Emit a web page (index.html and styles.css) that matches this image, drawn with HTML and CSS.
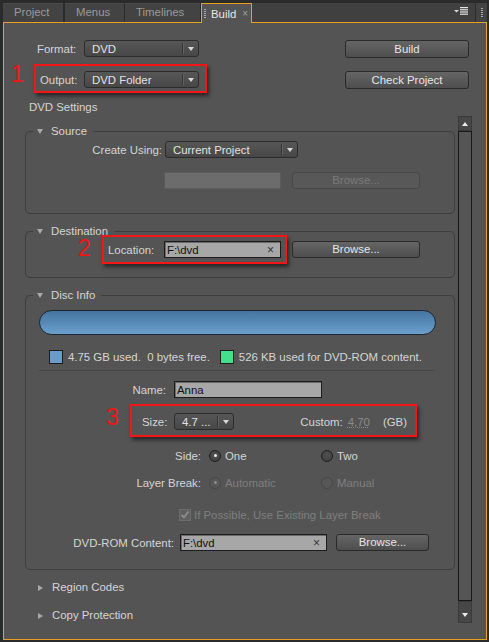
FILE: index.html
```html
<!DOCTYPE html>
<html>
<head>
<meta charset="utf-8">
<link rel="stylesheet" href="styles.css">
</head>
<body>
<div class="window">
  <div class="tabbar">
    <div class="tab tab-project">Project</div>
    <div class="tab tab-menus">Menus</div>
    <div class="tab tab-timelines">Timelines</div>
    <div class="tab-build"><span class="grip"></span><span class="tab-label">Build</span><span class="tab-close">×</span></div>
    <div class="tab-fill">
      <svg class="menu-icon" width="14" height="8" viewBox="0 0 14 8">
        <polygon points="0,3 5,3 2.5,5.5" fill="#d8d8d8"/>
        <rect x="6" y="0" width="8" height="1.2" fill="#e6e6e6"/>
        <rect x="6" y="2.2" width="8" height="1.2" fill="#e6e6e6"/>
        <rect x="6" y="4.4" width="8" height="1.2" fill="#e6e6e6"/>
        <rect x="6" y="6.6" width="8" height="1.2" fill="#e6e6e6"/>
      </svg>
    </div>
    <div class="tab-grip"><span class="grip"></span></div>
  </div>

  <div class="panel">
    <div class="top">
      <div class="top-left">
        <div class="format-row">
          <span class="lbl lbl-format">Format:</span>
          <div class="dropdown dd-format"><span class="dd-text">DVD</span><span class="dd-btn"><span class="dd-arrow"></span></span></div>
        </div>
        <div class="output-row">
          <span class="anno-num num1">1</span>
          <div class="anno-box box1">
            <span class="lbl lbl-output">Output:</span>
            <div class="dropdown dd-format"><span class="dd-text">DVD Folder</span><span class="dd-btn"><span class="dd-arrow"></span></span></div>
          </div>
        </div>
      </div>
      <div class="top-right">
        <button class="btn btn-top">Build</button>
        <button class="btn btn-top btn-check">Check Project</button>
      </div>
    </div>

    <div class="section-title">DVD Settings</div>

    <div class="scroll">
      <div class="scroll-content">
        <fieldset class="group group-source">
          <legend><span class="tri-down"></span>Source</legend>
          <div class="row row-create">
            <span class="lbl lbl-create">Create Using:</span>
            <div class="dropdown dd-create"><span class="dd-text">Current Project</span><span class="dd-btn"><span class="dd-arrow"></span></span></div>
          </div>
          <div class="row row-src2">
            <div class="field field-disabled"></div>
            <button class="btn btn-browse btn-disabled">Browse...</button>
          </div>
        </fieldset>

        <fieldset class="group group-dest">
          <legend><span class="tri-down"></span>Destination</legend>
          <div class="row row-dest">
            <span class="anno-num num2">2</span>
            <div class="anno-box box2">
              <span class="lbl lbl-loc">Location:</span>
              <div class="field field-loc"><span class="field-text">F:\dvd</span><span class="field-x">×</span></div>
            </div>
            <button class="btn btn-browse btn-dest">Browse...</button>
          </div>
        </fieldset>

        <fieldset class="group group-disc">
          <legend><span class="tri-down"></span>Disc Info</legend>
          <div class="usage-bar"></div>
          <div class="usage-row">
            <span class="swatch swatch-blue"></span>
            <span class="usage-text">4.75 GB used.&nbsp; 0 bytes free.</span>
            <span class="swatch swatch-green"></span>
            <span class="usage-text">526 KB used for DVD-ROM content.</span>
          </div>
          <div class="sep"></div>
          <div class="row row-name">
            <span class="lbl lbl-name">Name:</span>
            <div class="field field-name"><span class="field-text">Anna</span></div>
          </div>
          <div class="row row-size">
            <span class="anno-num num3">3</span>
            <div class="anno-box box3">
              <span class="lbl lbl-size">Size:</span>
              <div class="dropdown dd-size"><span class="dd-text">4.7 ...</span><span class="dd-btn"><span class="dd-arrow"></span></span></div>
              <span class="lbl lbl-custom">Custom:</span>
              <span class="custom-val">4,70</span>
              <span class="lbl lbl-gb">(GB)</span>
            </div>
          </div>
          <div class="row row-radio row-side">
            <span class="lbl lbl-radio">Side:</span>
            <span class="opt"><span class="radio on"></span><span class="opt-text">One</span></span>
            <span class="opt"><span class="radio"></span><span class="opt-text">Two</span></span>
          </div>
          <div class="row row-radio row-layer">
            <span class="lbl lbl-radio">Layer Break:</span>
            <span class="opt disabled"><span class="radio on"></span><span class="opt-text">Automatic</span></span>
            <span class="opt disabled"><span class="radio"></span><span class="opt-text">Manual</span></span>
          </div>
          <div class="row row-check">
            <span class="check"><svg width="10" height="10" viewBox="0 0 10 10"><polyline points="1.5,5 4,7.5 8.5,1.5" fill="none" stroke="#8e8e8e" stroke-width="1.8"/></svg></span>
            <span class="check-text">If Possible, Use Existing Layer Break</span>
          </div>
          <div class="row row-rom">
            <span class="lbl lbl-rom">DVD-ROM Content:</span>
            <div class="field field-rom"><span class="field-text">F:\dvd</span><span class="field-x">×</span></div>
            <button class="btn btn-browse btn-rom">Browse...</button>
          </div>
        </fieldset>

        <div class="collapsed collapsed-region"><span class="tri-right"></span>Region Codes</div>
        <div class="collapsed collapsed-copy"><span class="tri-right"></span>Copy Protection</div>
      </div>

      <div class="scrollbar">
        <div class="sb-up"><span class="sb-tri-up"></span></div>
        <div class="sb-thumb"></div>
        <div class="sb-down"><span class="sb-tri-down"></span></div>
      </div>
    </div>
  </div>
</div>
</body>
</html>
```

FILE: styles.css
```css
* { box-sizing: border-box; }
html, body { margin: 0; padding: 0; }
body {
  width: 489px;
  height: 642px;
  overflow: hidden;
  background: #2b2b2b;
  font-family: "Liberation Sans", Arial, sans-serif;
  font-size: 11.4px;
  color: #d4d4d4;
}

.window {
  height: 642px;
  padding: 3px 2px 2px 3px;
  display: flex;
  flex-direction: column;
}

/* ---------- tabs ---------- */
.tabbar {
  display: flex;
  height: 19px;
  flex: none;
}
.tab {
  height: 19px;
  line-height: 19px;
  padding-left: 11px;
  background: #434343;
  box-shadow: inset 0 1px 0 #4b4b4b;
  color: #9a9a9a;
  white-space: nowrap;
}
.tab-project { width: 60px; margin-right: 2px; }
.tab-menus { width: 59px; margin-right: 1px; }
.tab-timelines { width: 75px; margin-right: 1px; }
.tab-build {
  position: relative;
  z-index: 1;
  width: 51px;
  height: 20px;
  display: flex;
  align-items: center;
  padding-left: 2px;
  background: #545454;
  border: 1px solid #e9a21c;
  border-bottom: none;
  color: #e6e6e6;
}
.grip {
  width: 2px;
  height: 10px;
  background: repeating-linear-gradient(to bottom, #a9a9a9 0 1px, transparent 1px 2px);
  flex: none;
}
.tab-build .grip { margin-right: 5px; }
.tab-close {
  margin-left: 6px;
  color: #a0a0a0;
  font-size: 10px;
}
.tab-fill {
  flex: 1;
  margin-right: 1px;
  background: #404040;
  display: flex;
  justify-content: flex-end;
  align-items: flex-start;
  padding: 4px 7px 0 0;
}
.menu-icon { display: block; }
.tab-grip {
  width: 11px;
  background: #434343;
  display: flex;
  justify-content: center;
  align-items: center;
}

/* ---------- panel ---------- */
.panel {
  flex: 1;
  min-height: 0;
  display: flex;
  flex-direction: column;
  background: #545454;
  border: 1px solid #e9a21c;
}

.top {
  display: flex;
  justify-content: space-between;
  align-items: flex-start;
  padding: 17px 17px 0 7px;
}
.top-left { display: flex; flex-direction: column; }
.top-right { display: flex; flex-direction: column; }

.format-row {
  display: flex;
  align-items: center;
  margin-left: 26px;
  height: 17px;
}
.lbl { white-space: nowrap; }
.lbl-format { width: 47px; }
.output-row {
  display: flex;
  align-items: center;
  margin-top: 7px;
}
.lbl-output { width: 44px; }

/* annotations */
.anno-num {
  align-self: flex-start;
  width: 23px;
  flex: none;
  font-size: 23px;
  line-height: 23px;
  color: #f01414;
}
.anno-box {
  display: flex;
  align-items: center;
  border: 2px solid #f41616;
  box-shadow: 2px 3px 4px rgba(0, 0, 0, 0.55);
}
.num1 { margin-top: -1px; }
.box1 { padding: 5px 6px 3px 4px; }

/* dropdown */
.dropdown {
  display: flex;
  align-items: center;
  height: 17px;
  border: 1px solid #2c2c2c;
  border-radius: 3px;
  background: linear-gradient(#575757, #474747);
  color: #e2e2e2;
  flex: none;
}
.dd-text {
  flex: 1;
  padding-left: 7px;
  white-space: nowrap;
  overflow: hidden;
}
.dd-btn {
  width: 16px;
  height: 11px;
  border-left: 1px solid #353535;
  box-shadow: inset 1px 0 0 #626262;
  display: flex;
  align-items: center;
  justify-content: center;
}
.dd-arrow {
  width: 0;
  height: 0;
  border-left: 3.5px solid transparent;
  border-right: 3.5px solid transparent;
  border-top: 4px solid #d8d8d8;
}
.dd-format { width: 115px; }
.dd-create { width: 133px; margin-left: 3px; }
.dd-size { width: 60px; }

/* buttons */
.btn {
  font-family: inherit;
  font-size: 11.4px;
  height: 17px;
  padding: 0;
  border: 1px solid #2a2a2a;
  border-radius: 3px;
  background: linear-gradient(#656565, #4e4e4e);
  color: #e6e6e6;
  line-height: 15px;
  text-align: center;
  flex: none;
}
.btn-top { width: 124px; height: 18px; }
.btn-check { margin-top: 13px; }
.btn-browse { width: 128px; }
.btn-disabled {
  background: #585858;
  border-color: #484848;
  color: #7b7b7b;
}
.btn-dest { margin-left: 5px; }
.btn-rom { width: 93px; margin-left: 9px; }

/* text fields */
.field {
  height: 17px;
  display: flex;
  align-items: center;
  justify-content: space-between;
  padding: 0 6px 0 2px;
  background: #a7a7a7;
  border: 1px solid #1c1c1c;
  box-shadow: inset 1px 1px 0 #6a6a6a;
  color: #111;
  flex: none;
}
.field-x { color: #333; font-size: 12px; }
.field-disabled {
  width: 117px;
  background: #6c6c6c;
  border-color: #5b5b5b;
  box-shadow: none;
}
.field-loc { width: 117px; }
.field-name { width: 148px; }
.field-rom { width: 147px; }

.section-title {
  margin: 7px 0 0 25px;
  line-height: 14px;
}

/* ---------- scroll area ---------- */
.scroll {
  flex: 1;
  min-height: 0;
  display: flex;
  margin: 2px 14px 16px 21px;
}
.scroll-content {
  flex: 1;
  min-width: 0;
  overflow: hidden;
}

.group {
  margin: 10px 0 0 0;
  padding: 0;
  border: 1px solid #3e3e3e;
  border-radius: 5px;
  min-width: 0;
}
.group-source { margin-top: 8px; padding-bottom: 24px; }
.group-dest { padding-bottom: 13px; }
.group-disc { padding-bottom: 18px; }

legend {
  margin-left: 7px;
  padding: 0 6px 0 4px;
  line-height: 14px;
  color: #d4d4d4;
}
.tri-down {
  display: inline-block;
  width: 0;
  height: 0;
  border-left: 3.5px solid transparent;
  border-right: 3.5px solid transparent;
  border-top: 5px solid #a9a9a9;
  margin-right: 8px;
  vertical-align: 1px;
}
.tri-right {
  display: inline-block;
  width: 0;
  height: 0;
  border-top: 3.5px solid transparent;
  border-bottom: 3.5px solid transparent;
  border-left: 5px solid #a9a9a9;
  margin-right: 9px;
  vertical-align: 0;
}

.row { display: flex; align-items: center; }

.row-create { margin-top: 3px; }
.lbl-create { width: 136px; text-align: right; }
.row-src2 { margin: 14px 0 0 138px; }
.row-src2 .btn { margin-left: 11px; }

.row-dest { margin: -3px 0 0 52px; }
.num2 { width: 24px; margin-top: 2px; }
.box2 { padding: 4px; }
.lbl-loc { width: 56px; }

.usage-bar {
  margin: 8px 18px 0 13px;
  height: 25px;
  border-radius: 13px;
  border: 1px solid #1d2732;
  background: linear-gradient(#4674a0, #6b9fcc);
}
.usage-row {
  display: flex;
  align-items: center;
  height: 14px;
  margin: 15px 0 0 23px;
}
.swatch {
  width: 14px;
  height: 14px;
  border: 1px solid #1c1c1c;
  flex: none;
}
.swatch-blue { background: #699bcb; }
.swatch-green { background: #43e08b; margin-left: 10px; }
.usage-text { margin-left: 5px; white-space: nowrap; }

.sep {
  margin: 6px 19px 0 13px;
  border-top: 1px solid #474747;
}

.row-name { margin-top: 10px; }
.lbl-name { width: 148px; text-align: right; padding-right: 8px; }

.row-size { margin: 6px 0 0 80px; }
.num3 { width: 24px; margin-top: 2px; }
.box3 { width: 287px; padding: 7px 8px 5px 10px; }
.lbl-size { width: 32px; }
.lbl-custom { margin-left: auto; }
.custom-val {
  margin-left: 5px;
  color: #8a8a8a;
  text-decoration: underline dotted #8a8a8a;
}
.lbl-gb { margin-left: 13px; }

.row-radio { height: 15px; }
.row-side { margin-top: 11px; }
.row-layer { margin-top: 12px; }
.lbl-radio { width: 175px; text-align: right; }
.opt {
  display: flex;
  align-items: center;
  width: 112px;
}
.opt:first-of-type { margin-left: 8px; }
.lbl-radio + .opt { margin-left: 8px; }
.opt-text { margin-left: 4px; }
.radio {
  width: 12px;
  height: 12px;
  border-radius: 50%;
  border: 1px solid #1f1f1f;
  background: radial-gradient(circle at 50% 40%, #505050, #3e3e3e);
  display: flex;
  align-items: center;
  justify-content: center;
  flex: none;
}
.radio.on::after {
  content: "";
  width: 3px;
  height: 3px;
  border-radius: 50%;
  background: #ececec;
}
.opt.disabled { color: #7f7f7f; }
.opt.disabled .radio {
  border-color: #474747;
  background: #575757;
}
.opt.disabled .radio.on::after { background: #8c8c8c; }

.row-check { margin: 17px 0 0 153px; height: 15px; }
.check {
  width: 12px;
  height: 12px;
  border: 1px solid #6c6c6c;
  background: #5f5f5f;
  display: flex;
  align-items: center;
  justify-content: center;
  flex: none;
}
.check svg { display: block; }
.check-text { margin-left: 3px; color: #7f7f7f; white-space: nowrap; }

.row-rom { margin-top: 12px; }
.lbl-rom { width: 154px; text-align: right; padding-right: 6px; }

.collapsed {
  line-height: 14px;
  padding-left: 13px;
}
.collapsed-region { margin-top: 10px; }
.collapsed-copy { margin-top: 14px; }

/* scrollbar */
.scrollbar {
  width: 14px;
  margin-left: 3px;
  display: flex;
  flex-direction: column;
  flex: none;
}
.sb-up {
  height: 15px;
  background: #474747;
  border: 1px solid #3a3a3a;
  display: flex;
  align-items: center;
  justify-content: center;
}
.sb-tri-up {
  width: 0;
  height: 0;
  border-left: 3.5px solid transparent;
  border-right: 3.5px solid transparent;
  border-bottom: 4px solid #ececec;
}
.sb-thumb {
  flex: 1;
  background: #555555;
  border: 1px solid #181818;
}
.sb-down {
  height: 22px;
  background: #474747;
  border: 1px solid #3a3a3a;
  display: flex;
  align-items: flex-end;
  justify-content: center;
  padding-bottom: 5px;
}
.sb-tri-down {
  width: 0;
  height: 0;
  border-left: 3.5px solid transparent;
  border-right: 3.5px solid transparent;
  border-top: 4px solid #ececec;
}
```
